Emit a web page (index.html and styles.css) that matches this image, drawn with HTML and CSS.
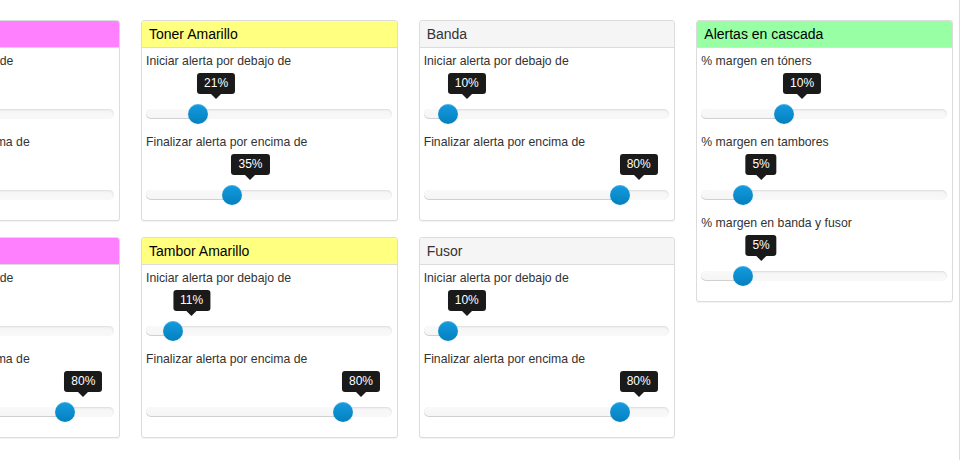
FILE: index.html
```html
<!DOCTYPE html>
<html lang="es">
<head>
<meta charset="utf-8">
<title>Alertas</title>
<link rel="stylesheet" href="styles.css">
</head>
<body>
<div class="page">
  <div class="grid">
    <section class="panel">
      <header class="panel-heading magenta">Toner Magenta</header>
      <div class="panel-body">
        <div class="field">
          <div class="label">Iniciar alerta por debajo de</div>
          <div class="slider" style="--p:20%"><div class="tip">20%</div><div class="track"><div class="sel"></div><div class="handle"></div></div></div>
        </div>
        <div class="field">
          <div class="label">Finalizar alerta por encima de</div>
          <div class="slider" style="--p:30%"><div class="tip">30%</div><div class="track"><div class="sel"></div><div class="handle"></div></div></div>
        </div>
      </div>
    </section>
    <section class="panel">
      <header class="panel-heading yellow">Toner Amarillo</header>
      <div class="panel-body">
        <div class="field">
          <div class="label">Iniciar alerta por debajo de</div>
          <div class="slider" style="--p:21%"><div class="tip">21%</div><div class="track"><div class="sel"></div><div class="handle"></div></div></div>
        </div>
        <div class="field">
          <div class="label">Finalizar alerta por encima de</div>
          <div class="slider" style="--p:35%"><div class="tip">35%</div><div class="track"><div class="sel"></div><div class="handle"></div></div></div>
        </div>
      </div>
    </section>
    <section class="panel">
      <header class="panel-heading gray">Banda</header>
      <div class="panel-body">
        <div class="field">
          <div class="label">Iniciar alerta por debajo de</div>
          <div class="slider" style="--p:10%"><div class="tip">10%</div><div class="track"><div class="sel"></div><div class="handle"></div></div></div>
        </div>
        <div class="field">
          <div class="label">Finalizar alerta por encima de</div>
          <div class="slider" style="--p:80%"><div class="tip">80%</div><div class="track"><div class="sel"></div><div class="handle"></div></div></div>
        </div>
      </div>
    </section>
    <section class="panel tall">
      <header class="panel-heading green">Alertas en cascada</header>
      <div class="panel-body">
        <div class="field">
          <div class="label">% margen en tóners</div>
          <div class="slider" style="--p:33.5%"><div class="tip">10%</div><div class="track"><div class="sel"></div><div class="handle"></div></div></div>
        </div>
        <div class="field">
          <div class="label">% margen en tambores</div>
          <div class="slider" style="--p:16.8%"><div class="tip">5%</div><div class="track"><div class="sel"></div><div class="handle"></div></div></div>
        </div>
        <div class="field">
          <div class="label">% margen en banda y fusor</div>
          <div class="slider" style="--p:16.8%"><div class="tip">5%</div><div class="track"><div class="sel"></div><div class="handle"></div></div></div>
        </div>
      </div>
    </section>
    <section class="panel">
      <header class="panel-heading magenta">Tambor Magenta</header>
      <div class="panel-body">
        <div class="field">
          <div class="label">Iniciar alerta por debajo de</div>
          <div class="slider" style="--p:20%"><div class="tip">20%</div><div class="track"><div class="sel"></div><div class="handle"></div></div></div>
        </div>
        <div class="field">
          <div class="label">Finalizar alerta por encima de</div>
          <div class="slider" style="--p:80%"><div class="tip">80%</div><div class="track"><div class="sel"></div><div class="handle"></div></div></div>
        </div>
      </div>
    </section>
    <section class="panel">
      <header class="panel-heading yellow">Tambor Amarillo</header>
      <div class="panel-body">
        <div class="field">
          <div class="label">Iniciar alerta por debajo de</div>
          <div class="slider" style="--p:11%"><div class="tip">11%</div><div class="track"><div class="sel"></div><div class="handle"></div></div></div>
        </div>
        <div class="field">
          <div class="label">Finalizar alerta por encima de</div>
          <div class="slider" style="--p:80%"><div class="tip">80%</div><div class="track"><div class="sel"></div><div class="handle"></div></div></div>
        </div>
      </div>
    </section>
    <section class="panel">
      <header class="panel-heading gray">Fusor</header>
      <div class="panel-body">
        <div class="field">
          <div class="label">Iniciar alerta por debajo de</div>
          <div class="slider" style="--p:10%"><div class="tip">10%</div><div class="track"><div class="sel"></div><div class="handle"></div></div></div>
        </div>
        <div class="field">
          <div class="label">Finalizar alerta por encima de</div>
          <div class="slider" style="--p:80%"><div class="tip">80%</div><div class="track"><div class="sel"></div><div class="handle"></div></div></div>
        </div>
      </div>
    </section>
  </div>
</div>
</body>
</html>
```
FILE: styles.css
```css
html, body {
  margin: 0;
  padding: 0;
  background: #fff;
  overflow: hidden;
}
body {
  font-family: "Liberation Sans", Arial, sans-serif;
  color: #333;
}
.page {
  box-sizing: border-box;
  width: 960px;
  height: 460px;
  border-right: 1px solid #dcdcdc;
  overflow: hidden;
}
.grid {
  display: grid;
  grid-template-columns: repeat(4, 256.67px);
  grid-template-rows: 201px 201px;
  column-gap: 21px;
  row-gap: 16px;
  align-items: start;
  padding-top: 20px;
  margin-left: -136.67px;
}
.panel {
  box-sizing: border-box;
  background: #fff;
  border: 1px solid #dcdcdc;
  border-radius: 3px;
  box-shadow: 0 1px 1px rgba(0, 0, 0, 0.05);
}
.tall {
  grid-column: 4;
  grid-row: 1 / span 2;
}
.panel-heading {
  height: 26px;
  line-height: 27px;
  padding: 0 7px;
  font-size: 14px;
  color: #000;
  border-bottom: 1px solid #dcdcdc;
  border-radius: 2px 2px 0 0;
}
.magenta { background: #ff80ff; }
.yellow { background: #ffff80; }
.green { background: #98ffa4; }
.gray { background: #f5f5f5; color: #333; }
.panel-body {
  padding: 5px 5px 20px 4px;
}
.field + .field {
  margin-top: 15px;
}
.label {
  font-size: 12.25px;
  line-height: 17px;
  color: #333;
  white-space: nowrap;
}
.slider {
  position: relative;
  padding-top: 39px;
}
.track {
  position: relative;
  height: 10px;
  border-radius: 5px;
  background: linear-gradient(#f5f5f5, #f9f9f9);
  box-shadow: inset 0 1px 2px rgba(0, 0, 0, 0.1);
}
.sel {
  position: absolute;
  left: 0;
  top: 0;
  bottom: 0;
  width: var(--p);
  border-radius: 5px 0 0 5px;
  background: linear-gradient(#f9f9f9, #f5f5f5);
  box-shadow: inset 0 -1px 0 rgba(0, 0, 0, 0.15);
}
.handle {
  position: absolute;
  top: -5px;
  left: calc(var(--p) - 10px);
  width: 20px;
  height: 20px;
  border-radius: 50%;
  background: linear-gradient(#149bdf, #0480be);
  box-shadow: inset 0 1px 0 rgba(255, 255, 255, 0.2), 0 1px 2px rgba(0, 0, 0, 0.05);
}
.tip {
  position: absolute;
  top: 3px;
  left: calc(var(--p) + 18.5px);
  transform: translateX(-50%);
  background: #1a1a1a;
  color: #fff;
  font-size: 12px;
  line-height: 15px;
  padding: 3px 7px;
  border-radius: 3px;
  white-space: nowrap;
}
.tip::after {
  content: "";
  position: absolute;
  top: 100%;
  left: 50%;
  margin-left: -5px;
  border-left: 5px solid transparent;
  border-right: 5px solid transparent;
  border-top: 5px solid #1a1a1a;
}
```
